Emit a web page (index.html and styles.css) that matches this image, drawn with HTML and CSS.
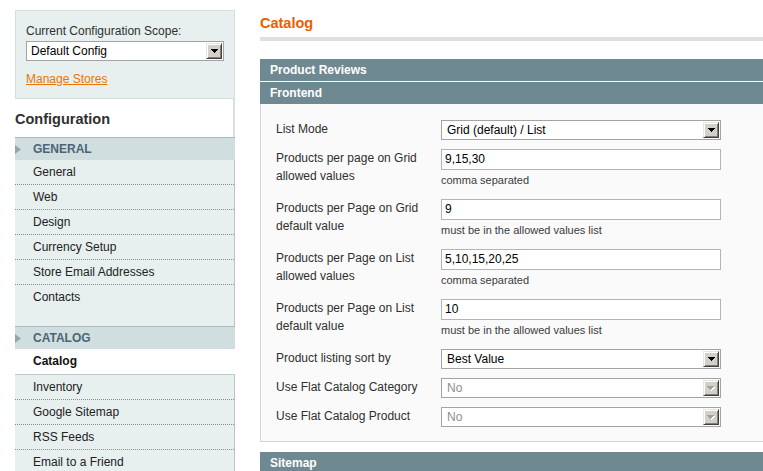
FILE: index.html
```html
<!DOCTYPE html>
<html>
<head>
<meta charset="utf-8">
<title>Configuration</title>
<link rel="stylesheet" href="styles.css">
</head>
<body>
<div class="page">
  <aside class="side">
    <div class="scope">
      <div class="scope-label">Current Configuration Scope:</div>
      <div class="select scope-select">
        <span class="select-val">Default Config</span>
        <span class="select-btn"><svg width="7" height="4" viewBox="0 0 7 4"><path d="M0 0H7L4 4H3Z"/></svg></span>
      </div>
      <a class="manage" href="#">Manage Stores</a>
    </div>
    <h3 class="side-title">Configuration</h3>

    <div class="group-head"><svg class="tri" width="6" height="9" viewBox="0 0 6 9"><path d="M0 0L6 4.5L0 9Z"/></svg>GENERAL</div>
    <ul class="items">
      <li>General</li>
      <li>Web</li>
      <li>Design</li>
      <li>Currency Setup</li>
      <li>Store Email Addresses</li>
      <li>Contacts</li>
    </ul>

    <div class="group-head"><svg class="tri" width="6" height="9" viewBox="0 0 6 9"><path d="M0 0L6 4.5L0 9Z"/></svg>CATALOG</div>
    <ul class="items">
      <li class="active">Catalog</li>
      <li>Inventory</li>
      <li>Google Sitemap</li>
      <li>RSS Feeds</li>
      <li>Email to a Friend</li>
    </ul>
  </aside>

  <main class="main">
    <h3 class="title">Catalog</h3>
    <div class="rule"></div>

    <div class="bar">Product Reviews</div>
    <div class="bar">Frontend</div>
    <div class="fieldset">
      <div class="row">
        <div class="label">List Mode</div>
        <div class="value">
          <div class="select"><span class="select-val">Grid (default) / List</span><span class="select-btn"><svg width="7" height="4" viewBox="0 0 7 4"><path d="M0 0H7L4 4H3Z"/></svg></span></div>
        </div>
      </div>
      <div class="row has-note">
        <div class="label">Products per page on Grid allowed values</div>
        <div class="value">
          <div class="input">9,15,30</div>
          <div class="note">comma separated</div>
        </div>
      </div>
      <div class="row has-note">
        <div class="label">Products per Page on Grid default value</div>
        <div class="value">
          <div class="input">9</div>
          <div class="note">must be in the allowed values list</div>
        </div>
      </div>
      <div class="row has-note">
        <div class="label">Products per Page on List allowed values</div>
        <div class="value">
          <div class="input">5,10,15,20,25</div>
          <div class="note">comma separated</div>
        </div>
      </div>
      <div class="row has-note">
        <div class="label">Products per Page on List default value</div>
        <div class="value">
          <div class="input">10</div>
          <div class="note">must be in the allowed values list</div>
        </div>
      </div>
      <div class="row">
        <div class="label">Product listing sort by</div>
        <div class="value">
          <div class="select"><span class="select-val">Best Value</span><span class="select-btn"><svg width="7" height="4" viewBox="0 0 7 4"><path d="M0 0H7L4 4H3Z"/></svg></span></div>
        </div>
      </div>
      <div class="row">
        <div class="label">Use Flat Catalog Category</div>
        <div class="value">
          <div class="select disabled"><span class="select-val">No</span><span class="select-btn"><svg width="8" height="5" viewBox="0 0 8 5"><path class="hl" d="M1 1H8L5 5H4Z"/><path d="M0 0H7L4 4H3Z"/></svg></span></div>
        </div>
      </div>
      <div class="row">
        <div class="label">Use Flat Catalog Product</div>
        <div class="value">
          <div class="select disabled"><span class="select-val">No</span><span class="select-btn"><svg width="8" height="5" viewBox="0 0 8 5"><path class="hl" d="M1 1H8L5 5H4Z"/><path d="M0 0H7L4 4H3Z"/></svg></span></div>
        </div>
      </div>
    </div>

    <div class="bar">Sitemap</div>
  </main>
</div>
</body>
</html>
```

FILE: styles.css
```css
html, body {
  margin: 0;
  padding: 0;
  overflow: hidden;
  background: #fff;
}
body {
  font-family: "Liberation Sans", Arial, sans-serif;
  font-size: 12px;
  color: #2f2f2f;
}
.page {
  display: flex;
  align-items: flex-start;
  gap: 25px;
  padding: 10px 0 0 15px;
}

/* ---------- sidebar ---------- */
.side {
  width: 220px;
  flex: none;
}
.scope {
  background: #e7efef;
  border: 1px solid #d3dfdf;
  padding: 12px 10px 11px 10px;
}
.scope-label {
  line-height: 16px;
  color: #2f2f2f;
}
.scope-select {
  margin-top: 2px;
  height: 19px;
}
.scope-select .select-val {
  padding-left: 4px;
}
.manage {
  display: block;
  margin-top: 10px;
  line-height: 16px;
  color: #ea7601;
  text-decoration: underline;
}
.side-title {
  margin: 0;
  height: 38px;
  box-sizing: border-box;
  padding-top: 2px;
  line-height: 36px;
  font-size: 14.5px;
  font-weight: bold;
  color: #2f2f2f;
  background: #fff;
  border-right: 2px solid #dedede;
}
.group-head {
  display: flex;
  align-items: center;
  height: 22px;
  border-top: 1px solid #a9bdc0;
  background: #d1dedf;
  color: #4a6577;
  font-weight: bold;
  text-transform: uppercase;
}
.group-head .tri {
  fill: #8ea6ad;
  margin-right: 12px;
}
.items {
  list-style: none;
  margin: 0;
  padding: 0 0 17px 0;
  background: #e7efef;
  border-right: 1px solid #b4c6c8;
}
.items li {
  height: 24px;
  line-height: 24px;
  padding-left: 18px;
  border-bottom: 1px dotted #8b8b8b;
  color: #222;
}
.items li:last-child {
  border-bottom: 0;
}
.items li.active {
  height: 25px;
  line-height: 25px;
  background: #fff;
  font-weight: bold;
  color: #111;
  border-bottom: 1px solid #bccbcd;
  margin-right: -1px;
}

/* ---------- main ---------- */
.main {
  flex: 1;
  min-width: 0;
  overflow: hidden;
}
.main > * {
  margin-right: -30px;
}
.title {
  margin: 4px 0 0 0;
  line-height: 18px;
  font-size: 14.5px;
  font-weight: bold;
  color: #eb5e00;
}
.rule {
  height: 4px;
  margin-top: 5px;
  margin-bottom: 18px;
  background: #dfdfdf;
}
.bar {
  height: 22px;
  line-height: 22px;
  padding-left: 10px;
  background: #6f8992;
  color: #fff;
  font-weight: bold;
}
.bar + .bar {
  margin-top: 1px;
}
.fieldset {
  background: #fafafa;
  border: 1px solid #d6d6d6;
  border-top: 0;
  padding: 16px 0 14px 15px;
  margin-bottom: 10px;
}
.row {
  display: flex;
  margin-bottom: 9px;
}
.row.has-note {
  margin-bottom: 12px;
}
.row:last-child {
  margin-bottom: 0;
}
.label {
  width: 155px;
  padding-right: 10px;
  line-height: 18px;
  flex: none;
  color: #2f2f2f;
}
.value {
  width: 280px;
  flex: none;
}
.input {
  height: 21px;
  box-sizing: border-box;
  border: 1px solid #b4b4b4;
  background: #fff;
  padding-left: 3px;
  line-height: 19px;
  color: #000;
}
.note {
  margin-top: 4px;
  line-height: 13px;
  font-size: 11px;
  color: #3a3a3a;
}

/* fake classic select */
.select {
  display: flex;
  align-items: stretch;
  height: 20px;
  box-sizing: border-box;
  border: 1px solid #a3a3a3;
  background: #fff;
  color: #000;
}
.select-val {
  flex: 1;
  padding-left: 5px;
  line-height: 18px;
  white-space: nowrap;
  overflow: hidden;
}
.select-btn {
  width: 16px;
  margin: 1px;
  box-sizing: border-box;
  display: flex;
  align-items: center;
  justify-content: center;
  background: #d4d0c8;
  border: 1px solid;
  border-color: #e8e6e1 #404040 #404040 #e8e6e1;
  box-shadow: inset 1px 1px #ffffff, inset -1px -1px #808080;
}
.select-btn svg {
  fill: #000;
  shape-rendering: crispEdges;
}
.select.disabled .select-val {
  color: #8d8d8d;
}
.select.disabled .select-btn svg {
  fill: #a0a0a0;
}
.select.disabled .select-btn svg .hl {
  fill: #ffffff;
}
```
